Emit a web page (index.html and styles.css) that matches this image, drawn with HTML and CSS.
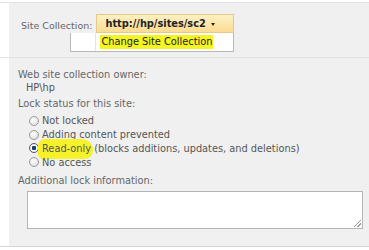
FILE: index.html
```html
<!DOCTYPE html>
<html>
<head>
<meta charset="utf-8">
<link rel="stylesheet" href="styles.css">
</head>
<body>
<div class="section top">
  <div class="panel top-panel">
    <span class="label">Site Collection:</span>
    <div class="picker">
      <div class="button"><span class="url">http://hp/sites/sc2</span><span class="caret"></span></div>
      <div class="menu">
        <div class="gutter"></div>
        <div class="item"><span class="hl">Change Site Collection</span></div>
      </div>
    </div>
  </div>
</div>
<div class="section main">
  <div class="panel main-panel">
    <div class="label">Web site collection owner:</div>
    <div class="owner">HP\hp</div>
    <div class="label lock">Lock status for this site:</div>
    <div class="radios">
      <label class="radio"><span class="dot"></span>Not locked</label>
      <label class="radio"><span class="dot"></span>Adding content prevented</label>
      <label class="radio"><span class="dot checked"></span><span class="marker">Read-only</span>&nbsp;(blocks additions, updates, and deletions)</label>
      <label class="radio"><span class="dot"></span>No access</label>
    </div>
    <div class="label addl">Additional lock information:</div>
    <div class="textarea"><span class="grip"></span></div>
  </div>
</div>
</body>
</html>
```
FILE: styles.css
```css
html, body { margin: 0; padding: 0; background: #fff; }
body {
  font-family: "DejaVu Sans", Verdana, sans-serif;
  font-size: 9.8px;
  color: #555;
  padding-top: 2px;
}
.section { border-top: 1px solid #e2e2e2; }
.main { border-bottom: 1px solid #d6d6d6; }
.panel { margin-left: 9px; background: #f0f0f0; }
.top-panel {
  height: 54px;
  display: flex;
  align-items: flex-start;
  padding-left: 12px;
  padding-top: 11px;
  box-sizing: border-box;
}
.top-panel .label { margin-top: 6px; color: #666; font-size: 9.5px; }
.picker { position: relative; margin-left: 4px; }
.button {
  width: 138px;
  height: 19px;
  box-sizing: border-box;
  border: 1px solid #e6c98a;
  background: linear-gradient(#fdf0c4, #fbdc93);
  display: flex;
  align-items: center;
  padding-left: 8px;
  font-weight: bold;
  color: #222;
}
.caret {
  width: 0; height: 0;
  border-left: 2.5px solid transparent;
  border-right: 2.5px solid transparent;
  border-top: 3px solid #222;
  margin-left: 5px;
  margin-top: 1px;
}
.menu {
  position: absolute;
  left: -26px;
  top: 19px;
  width: 164px;
  height: 19px;
  box-sizing: border-box;
  background: #fff;
  border: 1px solid #b8b8b8;
  border-top: none;
  display: flex;
}
.gutter { width: 24px; border-right: 1px solid #e4e4e4; }
.item { padding-left: 4px; display: flex; align-items: center; color: #1c1c3a; }
.hl { background: #f4f420; padding: 1px 1px 2px; }
.main-panel {
  height: 188px;
  padding: 10px 0 0 9px;
  box-sizing: border-box;
}
.main-panel .label { color: #666; line-height: 13px; }
.owner { padding-left: 8px; line-height: 14px; color: #555; }
.lock { margin-top: 2px; }
.radios { padding-left: 11px; margin-top: 4px; }
.radio { display: flex; align-items: center; height: 13.8px; color: #555; }
.dot {
  width: 10px; height: 10px;
  border-radius: 50%;
  border: 1px solid #9a9a9a;
  background: radial-gradient(circle at 40% 35%, #fff, #d8d8d8);
  margin-right: 3px;
  box-sizing: border-box;
  flex: none;
}
.dot.checked {
  background: radial-gradient(circle, #1c3f7a 0 2px, #fff 2.5px, #dcdcdc);
  border-color: #555;
}
.marker {
  background: #f6f22a;
  border-radius: 7px 12px 9px 5px;
  padding: 4px 2px 5px 4px;
  margin-left: -4px;
  margin-right: -2px;
}
.addl { margin-top: 5px; }
.textarea {
  position: relative;
  margin: 4px 0 0 9px;
  width: 336px;
  height: 38px;
  box-sizing: border-box;
  background: #fff;
  border: 1px solid #b5b5b5;
}
.grip {
  position: absolute;
  right: 1px; bottom: 1px;
  width: 7px; height: 7px;
  background: linear-gradient(135deg, transparent 45%, #999 45% 55%, transparent 55% 70%, #999 70% 80%, transparent 80%);
}
```
